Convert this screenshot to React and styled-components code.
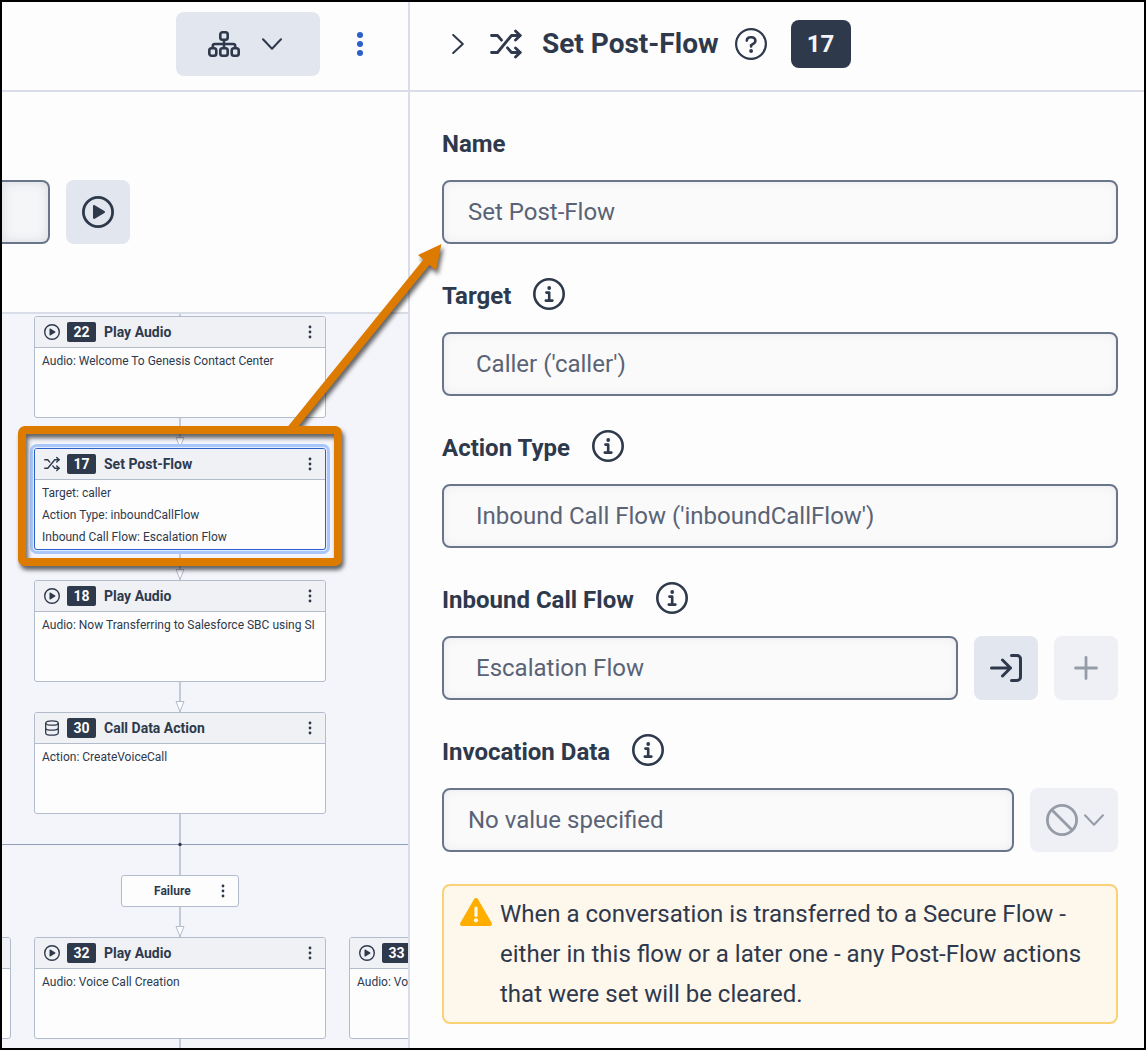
import React from "react";
import styled, { createGlobalStyle, css } from "styled-components";

const GlobalStyle = createGlobalStyle`
  *, *::before, *::after {
    box-sizing: border-box;
  }
  body {
    margin: 0;
    background: #fdfdfe;
    color: #2e394c;
    font-family: Roboto, "Liberation Sans", sans-serif;
  }
  button, input {
    font-family: inherit;
    color: inherit;
  }
`;

const Page = styled.div`
  position: relative;
  display: flex;
  min-height: 100vh;
  border: 2px solid #000;
`;

const FlowPane = styled.section`
  display: flex;
  flex-direction: column;
  flex: 0 0 408px;
  border-right: 2px solid #d9dde7;
`;

const Toolbar = styled.div`
  display: flex;
  align-items: center;
  justify-content: flex-end;
  gap: 24px;
  height: 90px;
  padding: 0 32px 4px 0;
  border-bottom: 2px solid #d9dde7;
`;

const IconButton = styled.button`
  display: inline-flex;
  align-items: center;
  justify-content: center;
  flex: none;
  width: 64px;
  height: 64px;
  padding: 0;
  border: 0;
  border-radius: 8px;
  background: #e2e6ee;
  cursor: pointer;
  &:disabled {
    background: #eff0f5;
    color: #969ca7;
    cursor: default;
  }
`;

const MenuButton = styled(IconButton)`
  justify-content: flex-start;
  gap: ${({ $wide }) => ($wide ? 22 : 6)}px;
  width: ${({ $wide }) => ($wide ? 144 : 88)}px;
  padding-left: ${({ $wide }) => ($wide ? 32 : 16)}px;
`;

const PlainButton = styled.button`
  display: inline-flex;
  align-items: center;
  justify-content: center;
  flex: none;
  width: ${({ $width }) => $width}px;
  height: 32px;
  padding: 0;
  border: 0;
  background: none;
  color: ${({ $color }) => $color || "inherit"};
  cursor: pointer;
`;

const SearchBar = styled.div`
  display: flex;
  align-items: center;
  gap: 16px;
  height: 222px;
  padding-top: 20px;
  border-bottom: 2px solid #d9dde7;
`;

const TextBox = styled.input`
  flex: 1;
  min-width: 0;
  height: 64px;
  padding: 0 ${({ $inset }) => ($inset ? 32 : 24)}px;
  border: 2px solid #69758a;
  border-radius: 8px;
  background: #fafafb;
  box-shadow: inset 0 0 8px rgba(46, 57, 76, 0.08);
  color: #5a6375;
  font-size: 24px;
  outline: none;
`;

const SearchBox = styled(TextBox)`
  flex: 0 0 48px;
  padding: 0;
  border-left: 0;
  border-radius: 0 8px 8px 0;
  background: #f5f6f8;
  box-shadow: inset 0 0 12px rgba(46, 57, 76, 0.14);
`;

const Canvas = styled.div`
  position: relative;
  flex: 1;
  overflow: hidden;
  background: #f4f5fb;
`;

const Wires = styled.svg`
  position: absolute;
  inset: 0;
  width: 100%;
  height: 100%;
`;

const Node = styled.article`
  position: absolute;
  width: 292px;
  height: 102px;
  border: 1px solid #b3bccd;
  border-radius: 3px;
  background: #fdfdfe;
  ${({ $selected }) =>
    $selected &&
    css`
      border-color: #2a60c8;
      box-shadow: 0 0 0 1px #e4edff, 0 0 0 4px #a9c7fb;
    `}
`;

const NodeHeader = styled.header`
  display: flex;
  align-items: center;
  height: 31px;
  padding: 0 7px 0 9px;
  border-bottom: 1px solid #b3bccd;
  border-radius: 2px 2px 0 0;
  background: #eff1f5;
`;

const NodeNumber = styled.span`
  flex: none;
  width: 29px;
  margin: 0 8px 0 7px;
  border-radius: 2px;
  background: #2e394c;
  color: #fdfdfe;
  font-size: 14px;
  font-weight: 700;
  line-height: 20px;
  text-align: center;
`;

const NodeTitle = styled.h3`
  flex: 1;
  margin: 0;
  font-size: 14px;
  font-weight: 700;
  line-height: 20px;
  white-space: nowrap;
`;

const NodeText = styled.div`
  padding: 2px 7px;
`;

const NodeLine = styled.p`
  margin: 0;
  font-size: 12px;
  line-height: 22px;
  white-space: nowrap;
`;

const PathLabel = styled.div`
  position: absolute;
  display: flex;
  align-items: center;
  width: 118px;
  height: 32px;
  padding: 0 7px 0 32px;
  border: 1px solid #b3bccd;
  border-radius: 3px;
  background: #fdfdfe;
  font-size: 12px;
  font-weight: 700;
  & > span {
    flex: 1;
  }
`;

const Details = styled.section`
  flex: 1;
  min-width: 0;
`;

const DetailsHeader = styled.header`
  display: flex;
  align-items: center;
  height: 90px;
  padding: 0 26px 4px 32px;
  border-bottom: 2px solid #d9dde7;
  & > svg {
    margin: 0 20px 0 16px;
  }
`;

const Title = styled.h1`
  margin: 0 16px 0 0;
  font-size: 28px;
  font-weight: 700;
  line-height: 32px;
`;

const Count = styled.span`
  width: 60px;
  margin-left: 24px;
  border-radius: 8px;
  background: #2e394c;
  color: #f2f4f7;
  font-size: 24px;
  font-weight: 700;
  line-height: 48px;
  text-align: center;
`;

const Form = styled.form`
  display: flex;
  flex-direction: column;
  gap: 32px;
  padding: 32px 26px 24px 32px;
`;

const FieldHead = styled.div`
  display: flex;
  align-items: flex-start;
  gap: 22px;
  height: 40px;
  margin-bottom: 16px;
  padding-top: 2px;
  font-size: 24px;
  font-weight: 700;
  line-height: 36px;
`;

const FieldRow = styled.div`
  display: flex;
  gap: 16px;
`;

const Warning = styled.div`
  display: flex;
  gap: 8px;
  padding: 8px 16px;
  border: 2px solid #fbd176;
  border-radius: 8px;
  background: #fef7ec;
  font-size: 24px;
  line-height: 40px;
  & > svg {
    flex: none;
    margin-top: 4px;
  }
  p {
    margin: 0;
  }
`;

const Annotation = styled.svg`
  position: absolute;
  top: -2px;
  left: -2px;
  width: 460px;
  height: 600px;
  pointer-events: none;
  filter: drop-shadow(2px 4px 2px rgba(0, 0, 0, 0.6));
`;

const PlayIcon = ({ size = 32 }) => (
  <svg width={size} height={size} viewBox="0 0 32 32" fill="none">
    <circle cx="16" cy="16" r="14.6" stroke="currentColor" strokeWidth="2.8" />
    <path d="M11 10.2v11.6c0 .9.9 1.5 1.7 1L22.4 17c.8-.5.8-1.5 0-2L12.7 9.2c-.8-.5-1.7.1-1.7 1Z" fill="currentColor" />
  </svg>
);

const ShuffleIcon = ({ size = 32 }) => (
  <svg width={size} height={size} viewBox="0 0 32 32" fill="none" stroke="currentColor" strokeWidth="2.8" strokeLinecap="round" strokeLinejoin="round">
    <path d="M1.5 7.5h6l4 4.700M1.5 24.5h6L21.5 7.5H30M17.5 19.8l4 4.700H30" />
    <path d="M25.5 3l4.700 4.500-4.700 4.500M25.5 20l4.700 4.500-4.700 4.500" />
  </svg>
);

const DataIcon = ({ size = 16 }) => (
  <svg width={size} height={size} viewBox="0 0 16 16" fill="none" stroke="currentColor" strokeWidth="1.3">
    <ellipse cx="8" cy="3" rx="6.3" ry="2.2" />
    <path d="M1.7 3v10c0 1.2 2.8 2.2 6.3 2.2s6.3-1 6.3-2.2V3M1.7 8c0 1.2 2.8 2.2 6.3 2.2s6.3-1 6.3-2.2" />
  </svg>
);

const DotsIcon = ({ radius = 1.4, step = 5, size = 16 }) => (
  <svg width={size} height={size} fill="currentColor">
    {[-step, 0, step].map((offset) => (
      <circle key={offset} cx={size / 2} cy={size / 2 + offset} r={radius} />
    ))}
  </svg>
);

const TreeIcon = () => (
  <svg width="32" height="32" viewBox="0 0 32 32" fill="none" stroke="currentColor" strokeWidth="2.6">
    <rect x="12.3" y="4.3" width="7.4" height="7.4" rx="2.2" />
    <rect x="1.3" y="20.3" width="7" height="7.4" rx="2.2" />
    <rect x="12.3" y="20.3" width="7.4" height="7.4" rx="2.2" />
    <rect x="23.7" y="20.3" width="7" height="7.4" rx="2.2" />
    <path d="M16 11.8v8.4M4.8 20.2V18a2 2 0 0 1 2-2h18.4a2 2 0 0 1 2 2v2.2" />
  </svg>
);

const Chevron = ({ right }) => (
  <svg width={right ? 12 : 20} height={right ? 20 : 12} viewBox={right ? "0 0 12 20" : "0 0 20 12"} fill="none" stroke="currentColor" strokeWidth="2" strokeLinecap="round" strokeLinejoin="round">
    <path d={right ? "M1.2 1l9.6 9-9.6 9" : "M1 1.2l9 9.6 9-9.6"} />
  </svg>
);

const InfoIcon = () => (
  <svg width="32" height="32" viewBox="0 0 32 32" fill="none" stroke="currentColor" strokeWidth="2.6">
    <circle cx="16" cy="16" r="14.7" />
    <path d="M13.4 14.6h2.8v8M12.8 22.6h6.6" strokeLinecap="round" strokeLinejoin="round" />
    <circle cx="16.2" cy="10" r="1.9" fill="currentColor" stroke="none" />
  </svg>
);

const HelpIcon = () => (
  <svg width="32" height="32" viewBox="0 0 32 32" fill="none" stroke="currentColor" strokeWidth="2.2">
    <circle cx="16" cy="16" r="14.9" />
    <path d="M11.8 12.6c0-2.1 1.7-3.4 3.8-3.4h1c2.1 0 3.8 1.5 3.8 3.5 0 1.3-.7 2.4-1.8 3l-2.5 1.5v1.3" strokeWidth="2.6" strokeLinecap="round" />
    <circle cx="16.1" cy="23" r="1.9" fill="currentColor" stroke="none" />
  </svg>
);

const EnterIcon = () => (
  <svg width="32" height="32" viewBox="0 0 32 32" fill="none" stroke="currentColor" strokeWidth="3" strokeLinecap="round" strokeLinejoin="round">
    <path d="M1.5 16h19M12.5 8l8 8-8 8M21.5 3.500H27a3.5 3.5 0 0 1 3.5 3.5v18a3.5 3.5 0 0 1-3.5 3.5h-5.5" />
  </svg>
);

const PlusIcon = () => (
  <svg width="24" height="24" viewBox="0 0 24 24" stroke="currentColor" strokeWidth="2.8" strokeLinecap="round">
    <path d="M12 1.5v21M1.5 12h21" />
  </svg>
);

const BanIcon = () => (
  <svg width="32" height="32" viewBox="0 0 32 32" fill="none" stroke="currentColor" strokeWidth="2.8">
    <circle cx="16" cy="16" r="14.6" />
    <path d="M6 6l20 20" />
  </svg>
);

const WarningIcon = () => (
  <svg width="32" height="28" viewBox="0 0 32 28">
    <path d="M14 1.3c.9-1.7 3.1-1.7 4 0l13.6 23.4c.9 1.6-.1 3.3-1.8 3.3H2.2C.5 28-.5 26.3.4 24.7L14 1.3Z" fill="#ffae00" />
    <path d="M16 10v7.5" stroke="#fef7ec" strokeWidth="3.2" strokeLinecap="round" />
    <circle cx="16" cy="22.3" r="2.1" fill="#fef7ec" />
  </svg>
);

const nodeIcons = { play: PlayIcon, shuffle: ShuffleIcon, data: DataIcon };

const nodes = [
  { id: 22, icon: "play", title: "Play Audio", left: 32, top: 2, lines: ["Audio: Welcome To Genesis Contact Center"] },
  {
    id: 17,
    icon: "shuffle",
    title: "Set Post-Flow",
    left: 32,
    top: 134,
    selected: true,
    lines: ["Target: caller", "Action Type: inboundCallFlow", "Inbound Call Flow: Escalation Flow"],
  },
  { id: 18, icon: "play", title: "Play Audio", left: 32, top: 266, lines: ["Audio: Now Transferring to Salesforce SBC using SI"] },
  { id: 30, icon: "data", title: "Call Data Action", left: 32, top: 398, lines: ["Action: CreateVoiceCall"] },
  { id: 32, icon: "play", title: "Play Audio", left: 32, top: 623, lines: ["Audio: Voice Call Creation"] },
  { id: 33, icon: "play", title: "Play Audio", left: 347, top: 623, lines: ["Audio: Voice Call Failure"] },
];

// y of each arrow tip, at the top edge of the node below it
const arrowTips = [134, 266, 398, 623];

const FlowNode = ({ node }) => {
  const Icon = nodeIcons[node.icon];
  return (
    <Node $selected={node.selected} style={{ left: node.left, top: node.top }}>
      <NodeHeader>
        <Icon size={16} />
        <NodeNumber>{node.id}</NodeNumber>
        <NodeTitle>{node.title}</NodeTitle>
        <PlainButton $width={16} aria-label={`${node.title} menu`}>
          <DotsIcon />
        </PlainButton>
      </NodeHeader>
      <NodeText>
        {node.lines.map((line) => (
          <NodeLine key={line}>{line}</NodeLine>
        ))}
      </NodeText>
    </Node>
  );
};

const Field = ({ id, label, info, value, inset, children }) => (
  <div>
    <FieldHead>
      <label htmlFor={id}>{label}</label>
      {info && (
        <PlainButton type="button" $width={32} aria-label={`About ${label}`}>
          <InfoIcon />
        </PlainButton>
      )}
    </FieldHead>
    <FieldRow>
      <TextBox id={id} type="text" defaultValue={value} $inset={inset} />
      {children}
    </FieldRow>
  </div>
);

const App = () => {
  return (
    <Page>
      <GlobalStyle />
      <FlowPane>
        <Toolbar>
          <MenuButton $wide aria-label="Layout">
            <TreeIcon />
            <Chevron />
          </MenuButton>
          <PlainButton $width={32} $color="#2a60c8" aria-label="More actions">
            <DotsIcon size={32} radius={3} step={9} />
          </PlainButton>
        </Toolbar>
        <SearchBar>
          <SearchBox type="text" aria-label="Search" />
          <IconButton aria-label="Play">
            <PlayIcon />
          </IconButton>
        </SearchBar>
        <Canvas>
          <Wires>
            <path d="M178 0V734" stroke="#b3bccd" strokeWidth="1.5" />
            <path d="M0 530.5H406" stroke="#8da0ba" />
            <circle cx="178" cy="530.5" r="1.7" fill="#2e394c" />
            {arrowTips.map((tip) => (
              <path key={tip} d={`M174 ${tip - 10.5}h8l-4 10Z`} fill="#fdfdfe" stroke="#b3bccd" />
            ))}
          </Wires>
          {nodes.map((node) => (
            <FlowNode key={node.id} node={node} />
          ))}
          <Node style={{ left: -283, top: 623 }}>
            <NodeHeader />
          </Node>
          <PathLabel style={{ left: 119, top: 561 }}>
            <span>Failure</span>
            <PlainButton $width={16} aria-label="Failure menu">
              <DotsIcon />
            </PlainButton>
          </PathLabel>
        </Canvas>
      </FlowPane>

      <Details>
        <DetailsHeader>
          <PlainButton $width={32} aria-label="Collapse panel">
            <Chevron right />
          </PlainButton>
          <ShuffleIcon />
          <Title>Set Post-Flow</Title>
          <PlainButton $width={32} aria-label="Help">
            <HelpIcon />
          </PlainButton>
          <Count>17</Count>
        </DetailsHeader>
        <Form>
          <Field id="name" label="Name" value="Set Post-Flow" />
          <Field id="target" label="Target" info inset value="Caller ('caller')" />
          <Field id="action-type" label="Action Type" info inset value="Inbound Call Flow ('inboundCallFlow')" />
          <Field id="inbound-flow" label="Inbound Call Flow" info inset value="Escalation Flow">
            <IconButton type="button" aria-label="Open flow">
              <EnterIcon />
            </IconButton>
            <IconButton type="button" aria-label="Add flow" disabled>
              <PlusIcon />
            </IconButton>
          </Field>
          <Field id="invocation-data" label="Invocation Data" info value="No value specified">
            <MenuButton type="button" aria-label="Value mode" disabled>
              <BanIcon />
              <Chevron />
            </MenuButton>
          </Field>
          <Warning>
            <WarningIcon />
            <p>
              When a conversation is transferred to a Secure Flow - either in this flow or a later one - any Post-Flow
              actions that were set will be cleared.
            </p>
          </Warning>
        </Form>
      </Details>

      <Annotation viewBox="0 0 460 600">
        <rect x="22" y="430" width="316" height="132" rx="3" fill="none" stroke="#dd7a00" strokeWidth="8" />
        <path d="M291 429L429 259" stroke="#dd7a00" strokeWidth="8" />
        <path d="M441.5 244L436 270.500 418 255Z" fill="#dd7a00" />
      </Annotation>
    </Page>
  );
};

export default App;
